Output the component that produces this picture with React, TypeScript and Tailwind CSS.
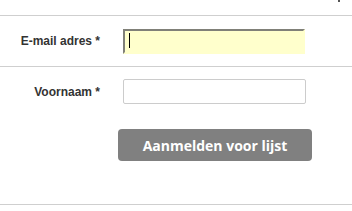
import React from 'react';

export default function App() {
  return (
    <div className="w-[352px] h-[211px] bg-white overflow-hidden relative font-['Liberation_Sans',Arial,sans-serif]">
      {/* cut-off glyph at the top edge */}
      <span className="absolute right-[12px] top-0 w-[2px] h-[2px] bg-[#555]" />

      <div className="h-[15px]" />
      <div className="h-px bg-[#cfcfcf]" />

      <div className="flex items-start pt-[12px] h-[50px]">
        <label className="w-[100px] text-right text-[12px] font-bold text-[#333] pt-[4px]">E-mail adres *</label>
        <div className="relative ml-[23px]">
          <input className="w-[182px] h-[25px] bg-[#ffffcc] border-2 border-t-[#808078] border-l-[#808078] border-r-[#ffffcc] border-b-[#ffffcc] outline-none px-[3px] text-[12px] caret-transparent" />
          {/* text caret */}
          <span className="absolute left-[6px] top-[5px] w-px h-[15px] bg-black" />
        </div>
      </div>
      <div className="h-px bg-[#cfcfcf]" />

      <div className="flex items-start pt-[12px]">
        <label className="w-[100px] text-right text-[12px] font-bold text-[#333] pt-[4px]">Voornaam *</label>
        <input className="ml-[23px] w-[183px] h-[25px] bg-white border border-[#cccccc] rounded-[2px] outline-none px-[3px] text-[12px]" />
      </div>

      <div className="pl-[118px] pt-[25px]">
        <button className="w-[194px] h-[32px] bg-[#808080] rounded-[4px] text-white font-bold text-[14px] font-['Open_Sans',sans-serif]">
          Aanmelden voor lijst
        </button>
      </div>

      <div className="h-[43px]" />
      <div className="h-px bg-[#cfcfcf]" />
    </div>
  );
}
